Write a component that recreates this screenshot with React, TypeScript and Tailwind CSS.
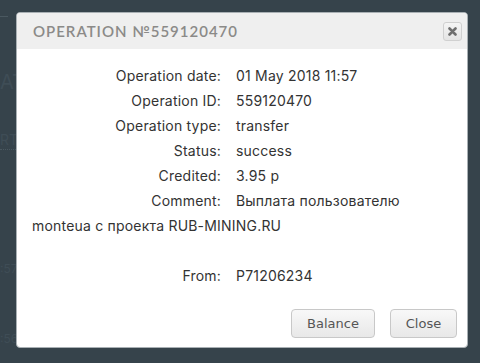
import { useState } from "react";

const rows: [string, string][] = [
  ["Operation date:", "01 May 2018 11:57"],
  ["Operation ID:", "559120470"],
  ["Operation type:", "transfer"],
  ["Status:", "success"],
  ["Credited:", "3.95 р"],
];

function Row({ label, value }: { label: string; value: string }) {
  return (
    <div>
      <span className="inline-block w-[189px] text-right mr-[15px]">{label}</span>
      {value}
    </div>
  );
}

export default function App() {
  const [open, setOpen] = useState(true);
  const btn =
    "h-[29px] rounded-[4px] border border-[#c8c8c8] bg-gradient-to-b from-[#f8f8f8] to-[#e8e8e8] text-[13px] text-[#555] font-['DejaVu_Sans',sans-serif]";

  return (
    <div className="relative w-[480px] h-[363px] overflow-hidden bg-[#36434b] font-['Inter',sans-serif]">
      {/* page underneath the overlay */}
      <div className="flex w-[16px] flex-col text-[#3f4d56]">
        <div className="mt-[16px] h-px w-[8px] bg-[#4a5860]" />
        <div className="mt-[54px] text-[20px] leading-[22px]">AT</div>
        <div className="mt-[38px] border-b border-dotted border-[#4a5860] text-[14px] leading-[18px]">RT</div>
        <div className="mt-[110px] text-[12px] leading-[18px]">:57</div>
        <div className="mt-[52px] text-[12px] leading-[18px]">:56</div>
      </div>

      {open && (
        <div className="absolute left-[16px] top-[12px] w-[452px] h-[336px] overflow-hidden rounded-[4px] border border-[#a9b0b4] bg-white">
          <div className="flex h-[36px] items-center justify-between bg-[#efefef] pl-[16px] pr-[5px]">
            <span className="text-[15px] tracking-[1px] text-[#8b8a88] font-['Lato',sans-serif] font-semibold">
              OPERATION №559120470
            </span>
            <button
              onClick={() => setOpen(false)}
              className="flex h-[19px] w-[19px] items-center justify-center rounded-[3px] border border-[#d0d0d0] bg-gradient-to-b from-[#f5f5f5] to-[#e4e4e4]"
            >
              <svg width="9" height="9" viewBox="0 0 9 9">
                <path d="M1.5 1.5l6 6M7.5 1.5l-6 6" stroke="#6f6f6f" strokeWidth="2.6" strokeLinecap="round" />
              </svg>
            </button>
          </div>

          <div className="pl-[15px] pr-[10px] pt-[14px] text-[14px] leading-[25px] tracking-[0.2px] text-[#333]">
            {rows.map(([l, v]) => (
              <Row key={l} label={l} value={v} />
            ))}
            <div>
              <span className="inline-block w-[189px] text-right mr-[15px]">Comment:</span>
              Выплата пользователю monteua с проекта RUB-MINING.RU
            </div>
            <div className="h-[25px]" />
            <Row label="From:" value="P71206234" />
          </div>

          <div className="mt-[21px] flex justify-end gap-[15px] pr-[10px]">
            <button className={`${btn} w-[84px]`}>Balance</button>
            <button onClick={() => setOpen(false)} className={`${btn} w-[67px]`}>
              Close
            </button>
          </div>
        </div>
      )}
    </div>
  );
}
